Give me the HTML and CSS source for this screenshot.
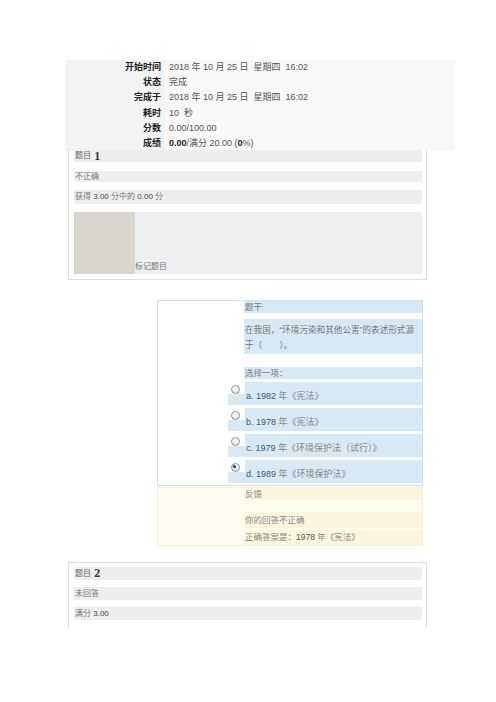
FILE: index.html
```html
<!DOCTYPE html>
<html lang="zh">
<head>
<meta charset="utf-8">
<link rel="stylesheet" href="styles.css">
</head>
<body>
<div class="page">
  <div class="summary">
    <div class="lab">开始时间</div><div class="val">2018 年 10 月 25 日 &nbsp;星期四 &nbsp;16:02</div>
    <div class="lab">状态</div><div class="val">完成</div>
    <div class="lab">完成于</div><div class="val">2018 年 10 月 25 日 &nbsp;星期四 &nbsp;16:02</div>
    <div class="lab">耗时</div><div class="val">10 &nbsp;秒</div>
    <div class="lab">分数</div><div class="val">0.00/100.00</div>
    <div class="lab">成绩</div><div class="val"><b>0.00</b>/满分 20.00 (<b>0</b>%)</div>
  </div>

  <div class="qbox q1">
    <div class="row r-title">题目 <span class="qno">1</span></div>
    <div class="row r-state">不正确</div>
    <div class="row r-grade">获得 <span class="num">3.00</span> 分中的 <span class="num">0.00</span> 分</div>
    <div class="flag">
      <div class="flag-pic"></div>
      <div class="flag-text">标记题目</div>
    </div>
  </div>

  <div class="content">
    <div class="content-side"></div>
    <div class="content-main">
      <div class="trow t-head">题干</div>
      <div class="trow t-q">在我国，“环境污染和其他公害”的表述形式源<br>于（　　）。</div>
      <div class="trow t-pick">选择一项：</div>
      <div class="ans"><span class="radio"></span><span class="alab"><span class="num">a. 1982</span> 年《宪法》</span></div>
      <div class="ans"><span class="radio"></span><span class="alab"><span class="num">b. 1978</span> 年《宪法》</span></div>
      <div class="ans"><span class="radio"></span><span class="alab"><span class="num">c. 1979</span> 年《环境保护法（试行）》</span></div>
      <div class="ans"><span class="radio checked"></span><span class="alab"><span class="num">d. 1989</span> 年《环境保护法》</span></div>
    </div>
  </div>

  <div class="feedback">
    <div class="fb-side"></div>
    <div class="fb-main">
      <div class="frow f-head">反馈</div>
      <div class="frow f-wrong">你的回答不正确</div>
      <div class="frow f-right">正确答案是：<span class="num">1978</span> 年《宪法》</div>
    </div>
  </div>

  <div class="qbox q2">
    <div class="row r-title">题目 <span class="qno">2</span></div>
    <div class="row r-state">未回答</div>
    <div class="row r-grade">满分 <span class="num">3.00</span></div>
  </div>
</div>
</body>
</html>
```

FILE: styles.css
```css
html, body {
  margin: 0;
  padding: 0;
  background: #ffffff;
}
* {
  box-sizing: border-box;
}
body {
  font-family: "Liberation Sans", "Noto Sans CJK SC", sans-serif;
  color: #555;
  width: 496px;
  height: 702px;
  overflow: hidden;
}
.page {
  display: flex;
  flex-direction: column;
  padding-top: 60px;
}

/* summary */
.summary {
  margin-left: 65px;
  width: 390px;
  background: #f6f6f6;
  display: grid;
  grid-template-columns: 100px 1fr;
  grid-auto-rows: 15.2px;
  font-size: 9px;
  line-height: 15.2px;
}
.lab {
  text-align: right;
  padding-right: 4px;
  font-weight: bold;
  color: #222;
  background: #f3f3f3;
}
.val {
  padding-left: 4px;
  color: #555;
  background: #f8f8f8;
}
.val b {
  color: #222;
}

/* question boxes */
.qbox {
  margin-left: 68px;
  width: 359px;
  border: 1px solid #dedede;
  border-top: none;
  padding: 0 4px 5px 5px;
  display: flex;
  flex-direction: column;
  gap: 8px;
}
.q1 {
  margin-top: -1px;
}
.row {
  background: #eeeeee;
  font-size: 8px;
  color: #777;
  padding-left: 1px;
  white-space: nowrap;
}
.r-title {
  height: 12px;
  line-height: 12px;
  color: #666;
}
.r-title .qno {
  font-family: "Liberation Serif", serif;
  font-weight: bold;
  font-size: 12px;
  color: #333;
  margin-left: 1px;
  vertical-align: top;
  line-height: 12px;
}
.r-state {
  height: 11px;
  line-height: 11px;
  margin-top: 1px;
}
.r-grade {
  height: 14px;
  line-height: 14px;
}
.num {
  font-family: "Liberation Sans", sans-serif;
  color: #444;
}
.flag {
  height: 62px;
  display: flex;
  background: #eeeff0;
}
.flag-pic {
  width: 61px;
  background: #d8d6cf;
}
.flag-text {
  align-self: flex-end;
  font-size: 8px;
  color: #777;
  line-height: 12px;
  padding-bottom: 1px;
}

/* content */
.content {
  margin-top: 20px;
  margin-left: 157px;
  width: 266px;
  border: 1px solid #c9e0ea;
  border-top-color: #d3e6ee;
  display: flex;
}
.content-side {
  width: 70px;
  flex: none;
}
.content-main {
  flex: 1;
  display: flex;
  flex-direction: column;
  padding-bottom: 2px;
}
.trow {
  margin-left: 16px;
  background: #d7e9f5;
  font-size: 8.5px;
  color: #777;
  padding-left: 1px;
}
.t-head {
  height: 12px;
  line-height: 12px;
}
.t-q {
  margin-top: 6px;
  padding-top: 4px;
  height: 35px;
  line-height: 15px;
  font-size: 8.6px;
}
.t-pick {
  margin-top: 13px;
  height: 12px;
  line-height: 12px;
}
.ans {
  margin-top: 3px;
  height: 23px;
  background: #d7e9f5;
  display: flex;
  align-items: flex-start;
}
.radio {
  flex: none;
  width: 17px;
  height: 12px;
  background: #ffffff;
  position: relative;
}
.radio::before {
  content: "";
  position: absolute;
  left: 3px;
  top: 3px;
  width: 7px;
  height: 7px;
  border-radius: 50%;
  border: 1px solid #8d8d8d;
  background: linear-gradient(#ffffff, #e2e2e2);
}
.radio.checked::after {
  content: "";
  position: absolute;
  left: 5px;
  top: 5px;
  width: 3px;
  height: 3px;
  border-radius: 50%;
  background: #333;
}
.alab {
  flex: 1;
  padding-left: 1px;
  padding-top: 8px;
  font-size: 9px;
  line-height: 12px;
  color: #888;
  white-space: nowrap;
}
.alab .num {
  color: #3a5a7a;
}

/* feedback */
.feedback {
  margin-top: 1px;
  margin-left: 157px;
  width: 266px;
  border: 1px solid #f7f0d8;
  background: #fffcf0;
  display: flex;
}
.fb-side {
  width: 86px;
  flex: none;
}
.fb-main {
  flex: 1;
  display: flex;
  flex-direction: column;
}
.frow {
  background: #fcf5dc;
  font-size: 8.5px;
  color: #888;
  padding-left: 1px;
  white-space: nowrap;
}
.f-head {
  height: 12px;
  line-height: 12px;
}
.f-wrong {
  margin-top: 12px;
  height: 16px;
  line-height: 16px;
}
.f-right {
  margin-top: 2px;
  height: 15px;
  line-height: 15px;
}
.f-right .num {
  color: #555;
}

/* question 2 */
.q2 {
  margin-top: 16px;
  border-top: 1px solid #dedede;
  border-bottom: none;
  padding-top: 4px;
  padding-bottom: 0;
  height: 66px;
  gap: 7px;
}
.q2 .r-title {
  height: 13px;
  line-height: 13px;
}
.q2 .r-state {
  height: 13px;
  line-height: 13px;
  margin-top: 0;
}
.q2 .r-grade {
  height: 13px;
  line-height: 13px;
}
```
